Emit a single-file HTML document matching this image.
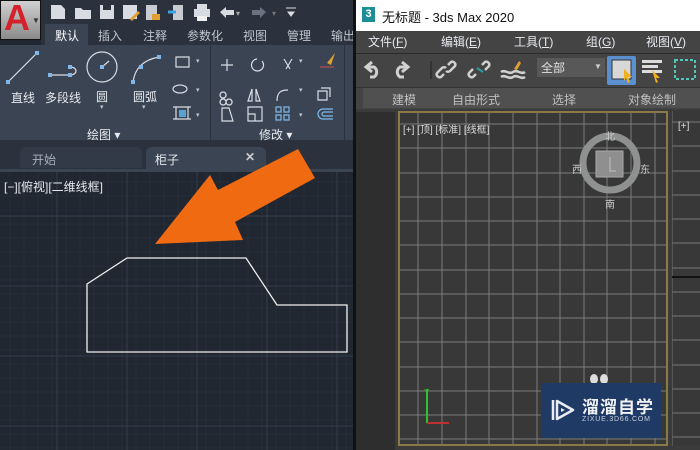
<!DOCTYPE html>
<html><head><meta charset="utf-8"><style>
*{margin:0;padding:0;box-sizing:border-box}
body{width:700px;height:450px;overflow:hidden;position:relative;background:#212731;font-family:"Liberation Sans","Noto Sans CJK SC",sans-serif}
.a{position:absolute}
.t{color:#e6e9ee;font-size:12px;white-space:nowrap}
</style></head><body>
<!-- AutoCAD -->
<div class="a" style="left:0;top:0;width:354px;height:24px;background:#2b323d"></div>
<div class="a" style="left:0;top:0;width:41px;height:40px;background:linear-gradient(#d0d0d0,#8a8a8a);border:1px solid #111"></div>
<div class="a" style="left:4px;top:-3px;font:bold 36px 'Liberation Sans',sans-serif;color:#d5212b">A</div>
<div class="a" style="left:32px;top:16px;color:#333;font-size:8px">▼</div>
<svg class="a" style="left:48px;top:2px" width="260" height="20">
<path d="M3 3h10l4 4v10H3z" fill="#d8dce2"/>
<path d="M27 6h6l2 2h8v9H27z" fill="#d8dce2"/>
<rect x="52" y="3" width="14" height="14" fill="#d8dce2"/><rect x="55" y="3" width="8" height="5" fill="#2b323d"/>
<rect x="75" y="3" width="14" height="14" fill="#d8dce2"/><path d="M82 17l8-8 2 2-8 8z" fill="#e0a030"/>
<rect x="98" y="3" width="11" height="15" fill="#c8ccd2"/><rect x="104" y="12" width="8" height="6" fill="#e0a030"/>
<rect x="125" y="3" width="10" height="15" fill="#c8ccd2"/><path d="M120 10h8" stroke="#3ba3e0" stroke-width="3"/>
<rect x="146" y="7" width="16" height="8" fill="#d8dce2"/><rect x="149" y="2" width="10" height="5" fill="#d8dce2"/><rect x="149" y="14" width="10" height="5" fill="#f0f0f0"/>
<path d="M172 10l6-5v3h8v5h-8v3z" fill="#d8dce2"/><text x="188" y="14" fill="#aaa" font-size="8">▾</text>
<path d="M218 10l-6-5v3h-8v5h8v3z" fill="#6a7280"/><text x="224" y="14" fill="#777" font-size="8">▾</text>
<path d="M238 6h10M240 10h6l-3 4z" stroke="#d8dce2" fill="#d8dce2"/>
</svg>
<div class="a" style="left:41px;top:24px;width:313px;height:21px;background:#2b323d"></div>
<div class="a" style="left:45px;top:24px;width:43px;height:21px;background:#3b4453"></div>
<div class="a t" style="left:55px;top:27px;font-size:12px;color:#fff">默认</div>
<div class="a t" style="left:98px;top:27px;color:#bfc5ce">插入</div>
<div class="a t" style="left:143px;top:27px;color:#bfc5ce">注释</div>
<div class="a t" style="left:187px;top:27px;color:#bfc5ce">参数化</div>
<div class="a t" style="left:243px;top:27px;color:#bfc5ce">视图</div>
<div class="a t" style="left:287px;top:27px;color:#bfc5ce">管理</div>
<div class="a t" style="left:331px;top:27px;color:#bfc5ce">输出</div>
<div class="a" style="left:0;top:45px;width:354px;height:98px;background:#3b4453"></div>
<div class="a" style="left:210px;top:45px;width:1px;height:98px;background:#2b323d"></div>
<div class="a" style="left:344px;top:45px;width:1px;height:98px;background:#2b323d"></div>
<div class="a" style="left:0;top:140px;width:354px;height:3px;background:#2b323d"></div>
<svg class="a" style="left:0;top:45px" width="354" height="95">
<g stroke="#d8dde5" fill="none" stroke-width="1.2">
<path d="M8 37L37 8"/><path d="M50 30h20M70 22c8 0 8 8 0 8"/>
<circle cx="102" cy="22" r="15"/><path d="M102 22l7-6"/>
<path d="M133 37c2-14 10-22 26-25"/>
<path d="M176 12h13v10h-13z"/><ellipse cx="180" cy="44" rx="7" ry="4"/><path d="M176 62h12v12h-12zM173 62h18M173 74h18"/>
<path d="M227 14v12M221 20h12"/><path d="M262 16a6 6 0 1 1-5-2"/><path d="M284 14l6 10M292 14l-6 10"/>
<path d="M252 44l-4 12h4zM256 44l4 12h-4z"/><path d="M277 56c0-8 3-11 11-11"/><path d="M318 46h9v9h-9zM321 43h9v9"/>
<path d="M222 63h7l4 13h-11z"/><path d="M248 62h14v14h-14zM248 69h7v7"/>
<path d="M276 62h5v5h-5zM284 62h5v5h-5zM276 70h5v5h-5zM284 70h5v5h-5z" stroke="#7fb8e8"/>
<path d="M333 64h-10a5 5 0 0 0 0 10h10M333 67h-9a2 2 0 0 0 0 4h9" stroke="#7fb8e8"/>
<path d="M223 47a3 3 0 1 0 .1 0M223 54a3 3 0 1 0 .1 0M229 54a3 3 0 1 0 .1 0"/>
</g>
<g fill="#7fb8e8"><rect x="6" y="35" width="4" height="4"/><rect x="35" y="6" width="4" height="4"/><rect x="48" y="28" width="4" height="4"/><rect x="68" y="28" width="4" height="4"/><rect x="68" y="20" width="4" height="4"/><rect x="100" y="20" width="4" height="4"/><rect x="131" y="35" width="4" height="4"/><rect x="139" y="20" width="4" height="4"/><rect x="157" y="10" width="4" height="4"/></g>
<path d="M335 8l-8 10 4 2z" fill="#e0a030"/><path d="M320 22h14" stroke="#d05050"/>
<rect x="179" y="65" width="7" height="7" fill="#5aa0d0"/>
<g fill="#c0c6cf" font-size="7"><text x="196" y="18">▾</text><text x="196" y="47">▾</text><text x="196" y="72">▾</text><text x="299" y="18">▾</text><text x="299" y="47">▾</text><text x="299" y="72">▾</text><text x="100" y="64">▾</text><text x="142" y="64">▾</text></g>
</svg>
<div class="a t" style="left:11px;top:89px">直线</div>
<div class="a t" style="left:45px;top:89px">多段线</div>
<div class="a t" style="left:96px;top:88px">圆</div>
<div class="a t" style="left:133px;top:88px">圆弧</div>
<div class="a t" style="left:87px;top:126px">绘图 ▾</div>
<div class="a t" style="left:259px;top:126px">修改 ▾</div>
<div class="a" style="left:0;top:143px;width:354px;height:29px;background:#2b323d"></div>
<div class="a" style="left:20px;top:147px;width:122px;height:21px;background:#323a47;border-radius:6px 6px 0 0"></div>
<div class="a t" style="left:32px;top:151px;color:#a8aeb8">开始</div>
<div class="a" style="left:146px;top:147px;width:120px;height:25px;background:#3b4453;border-radius:6px 6px 0 0"></div>
<div class="a t" style="left:155px;top:151px">柜子</div>
<div class="a t" style="left:245px;top:150px;font-weight:bold;color:#ccc">✕</div>
<div class="a" style="left:0;top:169px;width:354px;height:3px;background:#3b4453"></div>
<svg class="a" style="left:0;top:172px" width="354" height="278">
<g stroke="#272e39" stroke-width="1">
<path d="M10 0v278M24 0v278M38 0v278M52 0v278M66 0v278M80 0v278M94 0v278M108 0v278M122 0v278M136 0v278M150 0v278M164 0v278M178 0v278M192 0v278M206 0v278M220 0v278M234 0v278M248 0v278M262 0v278M276 0v278M290 0v278M304 0v278M318 0v278M332 0v278M346 0v278"/>
<path d="M0 10h354M0 24h354M0 38h354M0 52h354M0 66h354M0 80h354M0 94h354M0 108h354M0 122h354M0 136h354M0 150h354M0 164h354M0 178h354M0 192h354M0 206h354M0 220h354M0 234h354M0 248h354M0 262h354M0 276h354"/>
</g>
<g stroke="#323a48" stroke-width="1.2"><path d="M57 0v278M127 0v278M197 0v278M267 0v278M337 0v278M0 44h354M0 114h354M0 184h354M0 254h354"/></g>
<path d="M87 112L127 86H246L277 133H347V180H87Z" fill="none" stroke="#f0f0f0" stroke-width="1.3"/>
</svg>
<div class="a t" style="left:4px;top:178px;font-size:12px;color:#e6e9ee">[−][俯视][二维线框]</div>
<svg class="a" style="left:0;top:0" width="354" height="450"><polygon points="155,244 210,175 218,190 298,149 315,178 235,222 243,240" fill="#f06a12"/></svg>
<div class="a" style="left:353px;top:0;width:3px;height:450px;background:#111"></div>
<!-- 3ds Max -->
<div class="a" style="left:356px;top:0;width:344px;height:31px;background:#fff"></div>
<div class="a" style="left:362px;top:7px;width:13px;height:15px;background:#1e8c95;color:#fff;font-size:11px;font-weight:bold;text-align:center;line-height:15px">3</div>
<div class="a" style="left:382px;top:7px;font-size:13px;color:#111;white-space:nowrap">无标题 - 3ds Max 2020</div>
<div class="a" style="left:356px;top:31px;width:344px;height:22px;background:#444"></div>
<div class="a t" style="left:368px;top:33px;font-size:12px">文件(<u>F</u>)</div>
<div class="a t" style="left:441px;top:33px">编辑(<u>E</u>)</div>
<div class="a t" style="left:514px;top:33px">工具(<u>T</u>)</div>
<div class="a t" style="left:586px;top:33px">组(<u>G</u>)</div>
<div class="a t" style="left:646px;top:33px">视图(<u>V</u>)</div>
<div class="a" style="left:356px;top:53px;width:344px;height:34px;background:#444;border-top:1px solid #2a2a2a"></div>
<svg class="a" style="left:356px;top:53px" width="344" height="34">
<g stroke="#d0d0d0" stroke-width="3" fill="none"><path d="M16 9l-6 5 6 5M10 14h8a6 6 0 0 1 0 10h-4"/><path d="M46 9l6 5-6 5M52 14h-8a6 6 0 0 0 0 10h4"/></g>
<path d="M75 8v18" stroke="#222"/>
<g stroke="#d0d0d0" stroke-width="2.5" fill="none"><path d="M88 21l-3 3a3 3 0 0 1-4-4l5-5a3 3 0 0 1 4 0M92 12l3-3a3 3 0 0 1 4 4l-5 5a3 3 0 0 1-4 0"/><path d="M120 21l-3 3a3 3 0 0 1-4-4l4-4M126 12l3-3a3 3 0 0 1 4 4l-4 4"/><path d="M145 19c4-3 8 3 12 0s8 3 12 0M145 24c4-3 8 3 12 0s8 3 12 0"/></g>
<path d="M121 15l6 4" stroke="#2aa0a0" stroke-width="2"/><path d="M158 16l5-8 2 2-4 7z" fill="#e0a030"/>
<rect x="181" y="5" width="68" height="19" fill="#585858"/><text x="185" y="19" fill="#e0e0e0" font-size="12" font-family="Liberation Sans,Noto Sans CJK SC,sans-serif">全部</text><text x="238" y="16" fill="#ccc" font-size="8">▼</text>
<rect x="251" y="3" width="29" height="29" fill="#5a8fd0" rx="2"/><rect x="256" y="7" width="19" height="19" fill="#d8d8d8" stroke="#333"/><path d="M268 16l8 8h-4l2 5-2 1-2-5-2 3z" fill="#f0b020"/>
<g fill="#ddd"><rect x="286" y="7" width="20" height="3"/><rect x="286" y="12" width="16" height="3"/><rect x="286" y="17" width="20" height="3"/></g><path d="M296 17l8 8h-4l2 4-2 1z" fill="#f0b020"/>
<rect x="319" y="7" width="20" height="19" fill="none" stroke="#4fc8b8" stroke-width="2" stroke-dasharray="3 2"/>
</svg>
<div class="a" style="left:356px;top:87px;width:344px;height:22px;background:#444;border-top:1px solid #333"></div>
<div class="a" style="left:363px;top:88px;width:337px;height:20px;background:#505050"></div>
<div class="a t" style="left:392px;top:91px;color:#c0c0c0">建模</div>
<div class="a t" style="left:452px;top:91px;color:#c0c0c0">自由形式</div>
<div class="a t" style="left:552px;top:91px;color:#c0c0c0">选择</div>
<div class="a t" style="left:628px;top:91px;color:#c0c0c0">对象绘制</div>
<div class="a" style="left:356px;top:109px;width:344px;height:341px;background:#3b3b3b"></div>
<div class="a" style="left:356px;top:112px;width:39px;height:338px;background:#2e2e2e"></div>
<div class="a" style="left:398px;top:111px;width:270px;height:335px;border:2px solid #8a7a4a;background:#383838"></div>
<svg class="a" style="left:400px;top:113px" width="266" height="331">
<g stroke="#8a8a8a" stroke-width="1" opacity="0.85">
<path d="M18 0v331M42 0v331M66 0v331M89 0v331M113 0v331M137 0v331M160 0v331M184 0v331M207 0v331M231 0v331M255 0v331"/>
<path d="M0 11h266M0 35h266M0 60h266M0 84h266M0 108h266M0 132h266M0 157h266M0 181h266M0 205h266M0 229h266M0 254h266M0 278h266M0 302h266M0 326h266"/>
</g>
<circle cx="210" cy="50" r="27" fill="none" stroke="#8f9090" stroke-width="7"/>
<rect x="196" y="38" width="27" height="26" fill="#8f8f8f" stroke="#aaa"/>
<path d="M210 44v14h6" stroke="#b0b0b0" fill="none" stroke-width="1.5"/>
<path d="M27 310V276" stroke="#30c030" stroke-width="2"/><path d="M27 310h22" stroke="#c03030" stroke-width="2"/><text x="24" y="282" fill="#30c030" font-size="8">Y</text>
</svg>
<div class="a t" style="left:403px;top:121px;font-size:10px;color:#ddd">[+] [顶] [标准] [线框]</div>
<div class="a" style="left:605px;top:128px;font-size:10px;color:#ccc">北</div>
<div class="a" style="left:572px;top:161px;font-size:10px;color:#ccc">西</div>
<div class="a" style="left:640px;top:161px;font-size:10px;color:#ccc">东</div>
<div class="a" style="left:605px;top:196px;font-size:10px;color:#ccc">南</div>
<div class="a" style="left:672px;top:111px;width:28px;height:335px;background:#383838;border-left:1px solid #555"></div>
<svg class="a" style="left:672px;top:111px" width="28" height="335"><g stroke="#777"><path d="M0 11h28M0 35h28M0 60h28M0 84h28M0 108h28M0 132h28M0 157h28M0 181h28M0 205h28M0 229h28M0 254h28M0 278h28M0 302h28M0 326h28"/></g><path d="M0 166h28" stroke="#111" stroke-width="2"/></svg>
<div class="a t" style="left:678px;top:121px;font-size:10px;color:#ddd">[+]</div>
<div class="a" style="left:590px;top:374px;width:8px;height:10px;border-radius:50%;background:#ddd"></div>
<div class="a" style="left:600px;top:374px;width:8px;height:10px;border-radius:50%;background:#ddd"></div>
<div class="a" style="left:541px;top:383px;width:120px;height:55px;background:#203a66"></div>
<svg class="a" style="left:548px;top:396px" width="28" height="28"><path d="M5 4v20" stroke="#e8ecf2" stroke-width="2.5"/><path d="M9 5l16 9-16 9z" fill="none" stroke="#e8ecf2" stroke-width="2.5" stroke-linejoin="round"/><path d="M13 12l4 2-4 2z" fill="#e8ecf2"/></svg>
<div class="a" style="left:582px;top:393px;font-size:17px;font-weight:bold;color:#f0f2f6;letter-spacing:1px;white-space:nowrap">溜溜自学</div>
<div class="a" style="left:582px;top:416px;font-size:7px;color:#c8d0dc;letter-spacing:0.8px">ZIXUE.3D66.COM</div>
</body></html>
